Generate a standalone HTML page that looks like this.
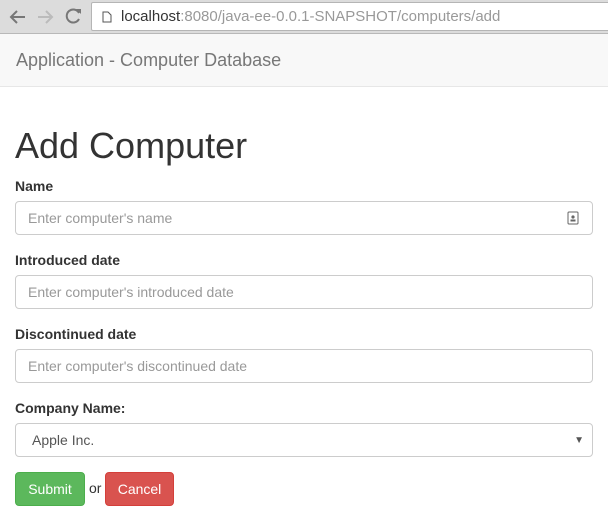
<!DOCTYPE html>
<html><head><style>
*{box-sizing:border-box}
body{margin:0;width:608px;height:507px;overflow:hidden;font-family:"Liberation Sans",sans-serif;background:#fff;color:#333;position:relative}
.chrome{position:absolute;left:0;top:0;width:608px;height:34px;background:#dcdcdc;border-bottom:1px solid #b8b8b8}
.url{position:absolute;left:91px;top:2px;width:530px;height:29px;background:#fff;border:1px solid #b5b5b5;border-radius:2px;font-size:15px;line-height:27px;padding-left:29px;color:#999}
.url b{font-weight:normal;color:#333}
.nav{position:absolute;left:0;top:34px;width:608px;height:53px;background:#f8f8f8;border-bottom:1px solid #e7e7e7;font-size:18px;color:#777;padding:16px 0 0 16px}
h1{position:absolute;left:15px;top:124px;margin:0;font-size:36px;font-weight:normal;line-height:44px;color:#333}
label{position:absolute;left:15px;font-size:14px;font-weight:bold;color:#333}
.in{position:absolute;left:15px;width:578px;height:34px;border:1px solid #ccc;border-radius:4px;font-size:14px;color:#999;padding:8px 12px;line-height:16px}
.btn{position:absolute;top:472px;height:34px;border-radius:4px;color:#fff;font-size:14px;line-height:32px;text-align:center}
</style></head><body>
<div class="chrome">
<svg style="position:absolute;left:0;top:0" width="90" height="34"><g fill="none" stroke="#777" stroke-width="2"><path d="M25 17H11M17 11l-6 6 6 6"/></g><g fill="none" stroke="#bbb" stroke-width="2"><path d="M38 17h14M46 11l6 6-6 6"/></g><path d="M79 13a6.5 6.5 0 1 0 0 6" fill="none" stroke="#777" stroke-width="2"/><path d="M76 9l5 0 0 5z" fill="#777"/></svg>
<div class="url"><svg style="position:absolute;left:10px;top:8px" width="10" height="12"><path d="M1 1h5l3 3v7H1z" fill="none" stroke="#555"/></svg><b>localhost</b>:8080/java-ee-0.0.1-SNAPSHOT/computers/add</div>
</div>
<div class="nav">Application - Computer Database</div>
<h1>Add Computer</h1>
<label style="top:178px">Name</label>
<div class="in" style="top:201px">Enter computer's name<svg style="position:absolute;right:13px;top:9px" width="12" height="14"><rect x="1" y="1" width="10" height="12" rx="1" fill="none" stroke="#666"/><circle cx="6" cy="6" r="1.6" fill="#666"/><rect x="3.5" y="8.5" width="5" height="2" fill="#666"/></svg></div>
<label style="top:252px">Introduced date</label>
<div class="in" style="top:275px">Enter computer's introduced date</div>
<label style="top:326px">Discontinued date</label>
<div class="in" style="top:349px">Enter computer's discontinued date</div>
<label style="top:400px">Company Name:</label>
<div class="in" style="top:423px;color:#555;padding-left:16px">Apple Inc.<span style="position:absolute;right:8px;top:9px;font-size:10px;color:#555">▼</span></div>
<div class="btn" style="left:15px;width:70px;background:#5cb85c;border:1px solid #4cae4c">Submit</div>
<span style="position:absolute;left:89px;top:480px;font-size:14px">or</span>
<div class="btn" style="left:105px;width:69px;background:#d9534f;border:1px solid #d43f3a">Cancel</div>
</body></html>
